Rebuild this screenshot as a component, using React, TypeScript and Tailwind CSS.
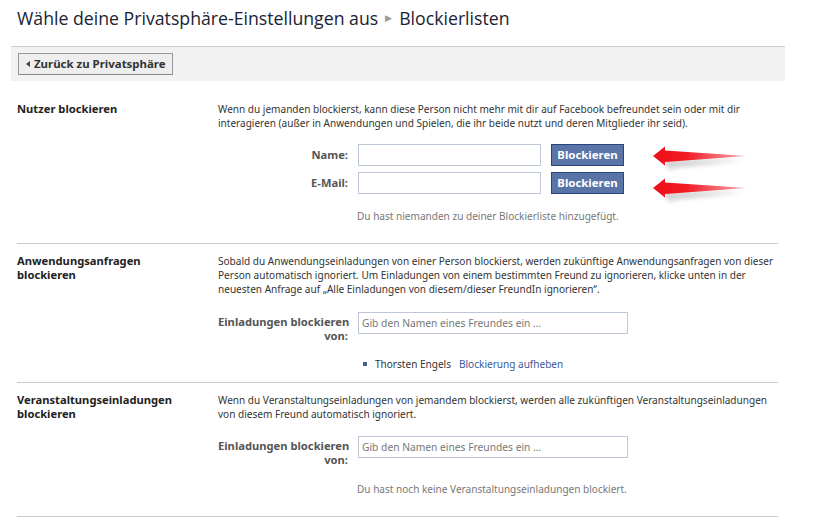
function Arrow({ className }: { className: string }) {
  return (
    <svg className={className} width="100" height="32" viewBox="0 0 100 32">
      <defs>
        <linearGradient id="arrowFill" x1="0" x2="1" y1="0" y2="0">
          <stop offset="0" stopColor="#ee1018" />
          <stop offset="0.35" stopColor="#f01a24" />
          <stop offset="0.85" stopColor="#f58a90" />
          <stop offset="1" stopColor="#fbd5d7" />
        </linearGradient>
        <filter id="arrowBlur">
          <feGaussianBlur stdDeviation="2.5" />
        </filter>
      </defs>
      <path d="M12 18 L22 30 L22 26 L94 18 Z" fill="#777777" opacity="0.35" filter="url(#arrowBlur)" />
      <path d="M3 14 L15 4.5 L15 8.5 L97 14 L15 20 L15 23.5 Z" fill="url(#arrowFill)" />
    </svg>
  );
}

function FieldInput({ className, placeholder }: { className: string; placeholder?: string }) {
  return (
    <input
      placeholder={placeholder}
      className={`ml-[10px] h-[22px] border border-[#bdc7d8] bg-white px-[3px] text-[10.25px] outline-none placeholder:text-[#777777] ${className}`}
    />
  );
}

function BlockButton() {
  return (
    <button className="ml-[10px] h-[22px] w-[73px] border border-[#29447e] bg-[#5b74a8] text-[11.4px] font-bold whitespace-nowrap text-white">
      Blockieren
    </button>
  );
}

export default function App() {
  return (
    <div className="relative h-[520px] w-[833px] overflow-hidden bg-white font-['Noto_Sans',sans-serif] text-[10.05px] leading-[14px] text-[#333333]">
      <div className="flex h-[46px] items-center gap-[7px] pb-[10px] pl-[17px] font-['Open_Sans',sans-serif] text-[17.7px] text-[#1a2233]">
        <span>Wähle deine Privatsphäre-Einstellungen aus</span>
        <span className="text-[9px] text-[#9a9a9a]">▶</span>
        <span>Blockierlisten</span>
      </div>

      <div className="ml-[11px] h-[35px] w-[774px] border-t border-[#cccccc] bg-[#f2f2f2] pl-[7px] pt-[6px]">
        <button className="flex h-[22px] w-[155px] items-center border border-[#999999] border-b-[#888888] bg-[#eeeeee] pl-[7px] text-[11.45px] font-bold whitespace-nowrap text-[#333333]">
          <svg width="4" height="6" viewBox="0 0 4 6" className="mr-[4px]">
            <path d="M0 3 L4 0 L4 6 Z" fill="#444444" />
          </svg>
          <span>Zurück zu Privatsphäre</span>
        </button>
      </div>

      <div className="ml-[17px] w-[761px]">
        <section className="flex h-[163px] border-b border-[#cccccc] pt-[21px]">
          <h2 className="w-[201px] shrink-0 text-[11.2px] font-bold text-[#222222]">Nutzer blockieren</h2>
          <div className="whitespace-nowrap">
            <p>
              Wenn du jemanden blockierst, kann diese Person nicht mehr mit dir auf Facebook befreundet sein oder mit dir
              <br />
              interagieren (außer in Anwendungen und Spielen, die ihr beide nutzt und deren Mitglieder ihr seid).
            </p>
            <div className="mt-[14px] flex items-center">
              <label className="w-[130px] text-right text-[11.2px] font-bold text-[#555555]">Name:</label>
              <FieldInput className="w-[183px]" />
              <BlockButton />
            </div>
            <div className="mt-[6px] flex items-center">
              <label className="w-[130px] text-right text-[11.2px] font-bold text-[#555555]">E-Mail:</label>
              <FieldInput className="w-[183px]" />
              <BlockButton />
            </div>
            <p className="mt-[15px] pl-[139px] text-[#777777]">Du hast niemanden zu deiner Blockierliste hinzugefügt.</p>
          </div>
        </section>

        <section className="flex h-[139px] border-b border-[#cccccc] pt-[10px]">
          <h2 className="w-[201px] shrink-0 text-[11.2px] font-bold text-[#222222]">
            Anwendungsanfragen
            <br />
            blockieren
          </h2>
          <div className="whitespace-nowrap">
            <p>
              Sobald du Anwendungseinladungen von einer Person blockierst, werden zukünftige Anwendungsanfragen von dieser
              <br />
              Person automatisch ignoriert. Um Einladungen von einem bestimmten Freund zu ignorieren, klicke unten in der
              <br />
              neuesten Anfrage auf „Alle Einladungen von diesem/dieser FreundIn ignorieren“.
            </p>
            <div className="mt-[16px] flex items-start">
              <label className="w-[130px] pt-[3px] text-right text-[11.2px] font-bold text-[#555555]">
                Einladungen blockieren
                <br />
                von:
              </label>
              <FieldInput className="w-[270px]" placeholder="Gib den Namen eines Freundes ein …" />
            </div>
            <div className="mt-[14px] flex items-center pl-[145px]">
              <span className="mr-[8px] h-[4px] w-[4px] bg-[#4a5f85]" />
              <span>Thorsten Engels</span>
              <a className="ml-[8px] text-[#3b5998]">Blockierung aufheben</a>
            </div>
          </div>
        </section>

        <section className="flex h-[134px] border-b border-[#cccccc] pt-[10px]">
          <h2 className="w-[201px] shrink-0 text-[11.2px] font-bold text-[#222222]">
            Veranstaltungseinladungen
            <br />
            blockieren
          </h2>
          <div className="whitespace-nowrap">
            <p>
              Wenn du Veranstaltungseinladungen von jemandem blockierst, werden alle zukünftigen Veranstaltungseinladungen
              <br />
              von diesem Freund automatisch ignoriert.
            </p>
            <div className="mt-[15px] flex items-start">
              <label className="w-[130px] pt-[3px] text-right text-[11.2px] font-bold text-[#555555]">
                Einladungen blockieren
                <br />
                von:
              </label>
              <FieldInput className="w-[270px]" placeholder="Gib den Namen eines Freundes ein …" />
            </div>
            <p className="mt-[15px] pl-[139px] text-[#777777]">Du hast noch keine Veranstaltungseinladungen blockiert.</p>
          </div>
        </section>
      </div>

      <Arrow className="absolute left-[650px] top-[142px]" />
      <Arrow className="absolute left-[650px] top-[174px]" />
    </div>
  );
}
